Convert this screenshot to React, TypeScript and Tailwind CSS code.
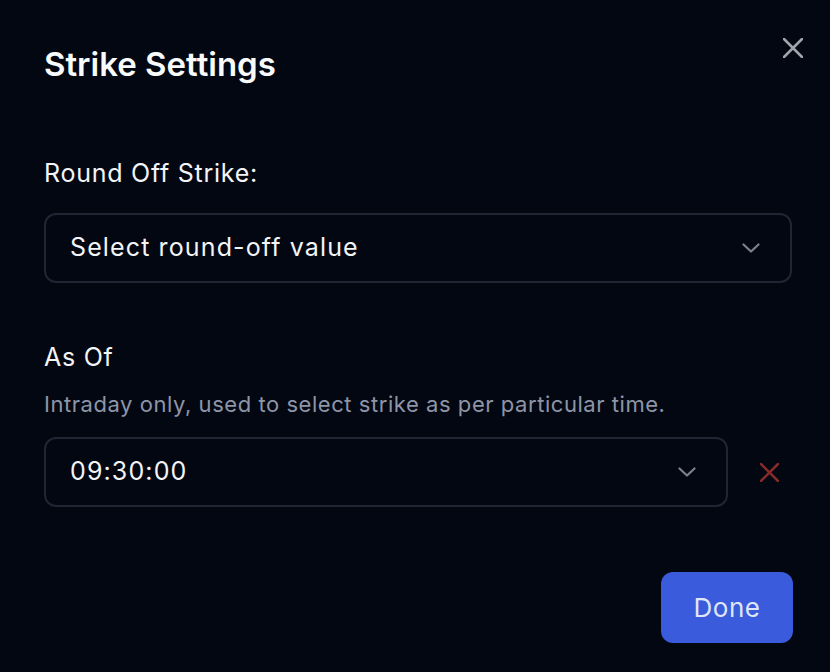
function Chevron() {
  return (
    <svg width="18" height="10" viewBox="0 0 18 10" fill="none" className="text-[#7b818d]">
      <polyline points="1.5,1.5 9,8.5 16.5,1.5" stroke="currentColor" strokeWidth="2.2" strokeLinecap="round" strokeLinejoin="round" />
    </svg>
  );
}

function Cross({ size, stroke }: { size: number; stroke: number }) {
  return (
    <svg width={size} height={size} viewBox={`0 0 ${size} ${size}`} fill="none">
      <path d={`M1 1L${size - 1} ${size - 1}M${size - 1} 1L1 ${size - 1}`} stroke="currentColor" strokeWidth={stroke} strokeLinecap="round" />
    </svg>
  );
}

function SelectBox({ value, className = "" }: { value: string; className?: string }) {
  return (
    <button
      className={`flex h-[70px] items-center justify-between rounded-xl border-2 border-[#1f2533] bg-transparent pl-[24px] pr-[30px] text-left ${className}`}
    >
      <span className="text-[25px] tracking-[0.045em] text-[#f3f4f6]">{value}</span>
      <Chevron />
    </button>
  );
}

export default function App() {
  return (
    <div
      className="relative h-[672px] w-[830px] bg-[#030712] pl-[44px] pr-[38px] pt-[44px]"
      style={{ fontFamily: "Inter, 'Noto Sans', sans-serif" }}
    >
      <button className="absolute right-[27px] top-[38px] text-[#a1a5ae]">
        <Cross size={20} stroke={2.5} />
      </button>

      <h2 className="text-[33px] font-semibold leading-[40px] text-[#f9fafb]">Strike Settings</h2>

      <div className="mt-[74px] text-[25px] leading-[30px] tracking-[0.03em] text-[#f3f4f6]">
        Round Off Strike:
      </div>
      <SelectBox value="Select round-off value" className="mt-[25px] w-full" />

      <div className="mt-[59px] text-[25px] leading-[30px] tracking-[0.03em] text-[#f3f4f6]">As Of</div>
      <p className="mt-[18px] text-[22px] leading-[28px] tracking-[0.025em] text-[#8d95a7]">
        Intraday only, used to select strike as per particular time.
      </p>
      <div className="mt-[19px] flex items-center">
        <SelectBox value="09:30:00" className="w-[684px]" />
        <button className="ml-[32px] text-[#862a2a]">
          <Cross size={19} stroke={2.5} />
        </button>
      </div>

      <div className="mt-[65px] flex justify-end">
        <button className="mr-[-1px] h-[71px] w-[132px] rounded-xl bg-[#3a5bdc] text-[26px] tracking-[0.02em] text-[#dfe6fa]">
          Done
        </button>
      </div>
    </div>
  );
}
